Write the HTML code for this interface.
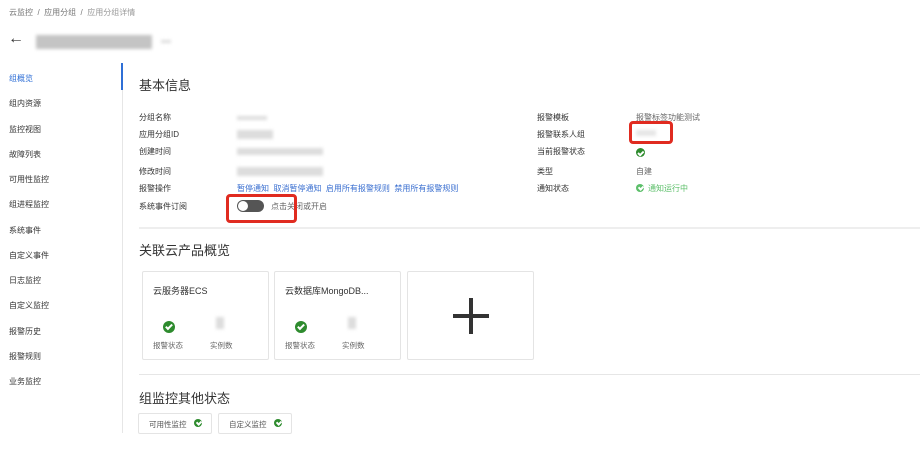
<html><head><style>
body{margin:0;width:920px;height:462px;background:#fff;font-family:"Liberation Sans","Noto Sans CJK SC",sans-serif;color:#333;position:relative;overflow:hidden}
.a{position:absolute;white-space:nowrap}
.nav{left:9px;font-size:8px;color:#333}
.lb{font-size:8px;color:#333}
.v{font-size:8px;color:#666}
.blur{background:#ddd;filter:blur(1.5px)}
.h{font-size:13px;color:#333}
.card{position:absolute;border:1px solid #e4e4e4;border-radius:2px;background:#fff}
.ck{position:absolute;border-radius:50%;background:#2e8b2e}
.ck:after{content:"";position:absolute;left:32%;top:18%;width:20%;height:40%;border:solid #fff;border-width:0 2px 2px 0;transform:rotate(45deg)}
.red{position:absolute;border:3px solid #e02b20;border-radius:4px}
</style></head><body>
<div class="a" style="left:9px;top:7px;font-size:8px;color:#777">云监控 &nbsp;/&nbsp; 应用分组 &nbsp;/&nbsp; <span style="color:#999">应用分组详情</span></div>
<div class="a" style="left:8px;top:30px;font-size:16px;color:#333">←</div>
<div class="a blur" style="left:36px;top:35px;width:116px;height:14px;background:#c4c4c4"></div>
<div class="a blur" style="left:161px;top:40px;width:10px;height:3px"></div>
<div class="a" style="left:122px;top:63px;width:1px;height:370px;background:#e6e6e6"></div>
<div class="a" style="left:121px;top:63px;width:2px;height:27px;background:#2f6fd6"></div>
<div class="a nav" style="top:73px;color:#2f6fd6">组概览</div>
<div class="a nav" style="top:98px">组内资源</div>
<div class="a nav" style="top:124px">监控视图</div>
<div class="a nav" style="top:149px">故障列表</div>
<div class="a nav" style="top:174px">可用性监控</div>
<div class="a nav" style="top:199px">组进程监控</div>
<div class="a nav" style="top:225px">系统事件</div>
<div class="a nav" style="top:250px">自定义事件</div>
<div class="a nav" style="top:275px">日志监控</div>
<div class="a nav" style="top:300px">自定义监控</div>
<div class="a nav" style="top:326px">报警历史</div>
<div class="a nav" style="top:351px">报警规则</div>
<div class="a nav" style="top:376px">业务监控</div>

<div class="a h" style="left:139px;top:75px">基本信息</div>
<div class="a lb" style="left:139px;top:112px">分组名称</div>
<div class="a lb" style="left:139px;top:129px">应用分组ID</div>
<div class="a lb" style="left:139px;top:146px">创建时间</div>
<div class="a lb" style="left:139px;top:166px">修改时间</div>
<div class="a lb" style="left:139px;top:183px">报警操作</div>
<div class="a lb" style="left:139px;top:201px">系统事件订阅</div>
<div class="a blur" style="left:237px;top:116px;width:30px;height:4px"></div>
<div class="a blur" style="left:237px;top:130px;width:36px;height:9px"></div>
<div class="a blur" style="left:237px;top:148px;width:86px;height:7px"></div>
<div class="a blur" style="left:237px;top:167px;width:86px;height:9px"></div>
<div class="a" style="left:237px;top:183px;font-size:8px;color:#3a6fd0">暂停通知 &nbsp;取消暂停通知 &nbsp;启用所有报警规则 &nbsp;禁用所有报警规则</div>
<div class="a" style="left:237px;top:200px;width:27px;height:12px;border-radius:7px;background:#555"></div>
<div class="a" style="left:238px;top:201px;width:10px;height:10px;border-radius:50%;background:#fff"></div>
<div class="a v" style="left:271px;top:201px">点击关闭或开启</div>
<div class="red" style="left:226px;top:194px;width:65px;height:23px"></div>

<div class="a lb" style="left:537px;top:112px">报警模板</div>
<div class="a lb" style="left:537px;top:129px">报警联系人组</div>
<div class="a lb" style="left:537px;top:146px">当前报警状态</div>
<div class="a lb" style="left:537px;top:166px">类型</div>
<div class="a lb" style="left:537px;top:183px">通知状态</div>
<div class="a v" style="left:636px;top:112px">报警标签功能测试</div>
<div class="red" style="left:629px;top:121px;width:38px;height:17px;background:#fff"></div>
<div class="a blur" style="left:636px;top:130px;width:20px;height:6px;background:#e6e6e6"></div>
<div class="ck" style="left:636px;top:148px;width:9px;height:9px"></div>
<div class="a v" style="left:636px;top:166px">自建</div>
<div class="ck" style="left:636px;top:184px;width:8px;height:8px;background:#5cbf6a"></div>
<div class="a" style="left:648px;top:183px;font-size:8px;color:#5cbf6a">通知运行中</div>

<div class="a" style="left:139px;top:227px;width:781px;height:2px;background:#eee"></div>
<div class="a h" style="left:139px;top:240px">关联云产品概览</div>
<div class="card" style="left:142px;top:271px;width:125px;height:87px">
<div class="a" style="left:10px;top:12px;font-size:9px">云服务器ECS</div>
<div class="ck" style="left:20px;top:49px;width:12px;height:12px"></div>
<div class="a blur" style="left:73px;top:45px;width:8px;height:12px"></div>
<div class="a v" style="left:10px;top:68px;font-size:7.5px">报警状态</div>
<div class="a v" style="left:67px;top:68px;font-size:7.5px">实例数</div></div>
<div class="card" style="left:274px;top:271px;width:125px;height:87px">
<div class="a" style="left:10px;top:12px;font-size:9px">云数据库MongoDB...</div>
<div class="ck" style="left:20px;top:49px;width:12px;height:12px"></div>
<div class="a blur" style="left:73px;top:45px;width:8px;height:12px"></div>
<div class="a v" style="left:10px;top:68px;font-size:7.5px">报警状态</div>
<div class="a v" style="left:67px;top:68px;font-size:7.5px">实例数</div></div>
<div class="card" style="left:407px;top:271px;width:125px;height:87px">
<div class="a" style="left:45px;top:42px;width:36px;height:4px;background:#333"></div>
<div class="a" style="left:61px;top:26px;width:4px;height:36px;background:#333"></div></div>
<div class="a" style="left:139px;top:374px;width:781px;height:1px;background:#e6e6e6"></div>
<div class="a h" style="left:139px;top:388px">组监控其他状态</div>
<div class="card" style="left:138px;top:413px;width:72px;height:19px">
<div class="a" style="left:10px;top:5px;font-size:7.5px;color:#555">可用性监控</div>
<div class="ck" style="left:55px;top:5px;width:8px;height:8px"></div></div>
<div class="card" style="left:218px;top:413px;width:72px;height:19px">
<div class="a" style="left:10px;top:5px;font-size:7.5px;color:#555">自定义监控</div>
<div class="ck" style="left:55px;top:5px;width:8px;height:8px"></div></div>
</body></html>
